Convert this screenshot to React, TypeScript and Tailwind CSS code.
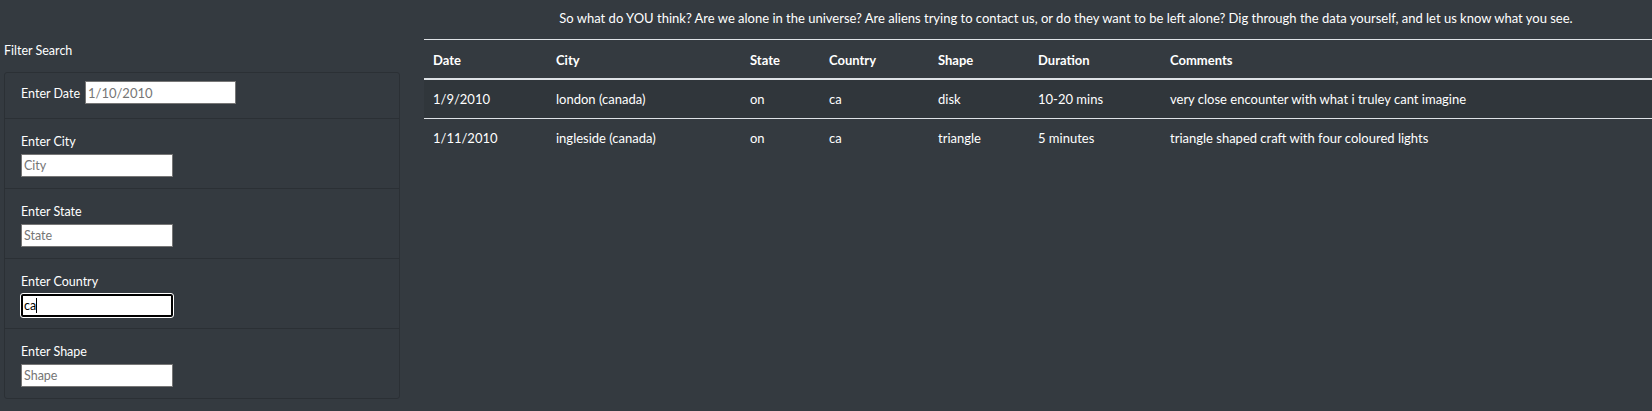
import { useState } from "react";

interface Sighting {
  date: string;
  city: string;
  state: string;
  country: string;
  shape: string;
  duration: string;
  comments: string;
}

const sightings: Sighting[] = [
  {
    date: "1/9/2010",
    city: "london (canada)",
    state: "on",
    country: "ca",
    shape: "disk",
    duration: "10-20 mins",
    comments: "very close encounter with what i truley cant imagine",
  },
  {
    date: "1/11/2010",
    city: "ingleside (canada)",
    state: "on",
    country: "ca",
    shape: "triangle",
    duration: "5 minutes",
    comments: "triangle shaped craft with four coloured lights",
  },
];

const cols =
  "grid grid-cols-[123px_194px_79px_109px_100px_132px_1fr] items-center";

function FilterItem({ label, placeholder }: { label: string; placeholder: string }) {
  return (
    <li className="border-t border-[#2b3035] pl-[16px] pt-[12px] pb-[11px]">
      <label className="block pt-[2px] leading-[18px]">{label}</label>
      <input
        type="text"
        placeholder={placeholder}
        className="mt-[3px] block h-[23px] w-[152px] border border-[#767676] bg-white px-[2px] text-[12.5px] text-black placeholder:text-[#757575] outline-none"
      />
    </li>
  );
}

export default function App() {
  const [date] = useState("");

  return (
    <div
      className="h-[411px] w-full bg-[#343a40] text-white flex"
      style={{ fontFamily: "Lato, 'Open Sans', sans-serif" }}
    >
      {/* Sidebar filters */}
      <div className="w-[404px] shrink-0 pl-[4px] text-[12.5px]">
        <p className="pt-[42px] leading-[18px]">Filter Search</p>
        <ul className="mt-[12px] w-[396px] rounded-[3px] border border-[#2b3035]">
          <li className="flex items-center pl-[16px] pt-[8px] pb-[14px]">
            <label className="mt-[3px] leading-[18px]">Enter Date</label>
            <input
              type="text"
              value={date}
              readOnly
              placeholder="1/10/2010"
              className="ml-[5px] h-[23px] w-[151px] border border-[#767676] bg-white px-[2px] text-[13px] text-black placeholder:text-[#757575] outline-none"
            />
          </li>
          <FilterItem label="Enter City" placeholder="City" />
          <FilterItem label="Enter State" placeholder="State" />
          <li className="border-t border-[#2b3035] pl-[16px] pt-[12px] pb-[11px]">
            <label className="block pt-[2px] leading-[18px]">Enter Country</label>
            <div className="relative mt-[3px] h-[23px] w-[152px] rounded-[2px] border-2 border-black bg-white px-[1px] text-[12.5px] leading-[19px] text-black outline outline-1 outline-white">
              ca
              <span className="absolute left-[13px] top-[2px] h-[15px] w-px bg-black" />
            </div>
          </li>
          <FilterItem label="Enter Shape" placeholder="Shape" />
        </ul>
      </div>

      {/* Results */}
      <div className="flex-1 pl-[20px] text-[13px]">
        <p className="pt-[9px] pl-[56px] text-center leading-[18px]">
          So what do YOU think? Are we alone in the universe? Are aliens trying to contact us, or do they want to be left alone? Dig through the data yourself, and let us know what you see.
        </p>
        <div className="mt-[12px] border-t border-[#dee2e6]">
          <div className={`${cols} h-[40px] pt-[3px] border-b-2 border-[#dee2e6] font-bold`}>
            <span className="pl-[9px]">Date</span>
            <span className="pl-[9px]">City</span>
            <span className="pl-[9px]">State</span>
            <span className="pl-[9px]">Country</span>
            <span className="pl-[9px]">Shape</span>
            <span className="pl-[9px]">Duration</span>
            <span className="pl-[9px]">Comments</span>
          </div>
          {sightings.map((s, i) => (
            <div
              key={s.date}
              className={`${cols} h-[39px] pt-[1px] ${
                i === 0 ? "border-b border-[#dee2e6] bg-[#30363b]" : ""
              }`}
            >
              <span className="pl-[9px]">{s.date}</span>
              <span className="pl-[9px]">{s.city}</span>
              <span className="pl-[9px]">{s.state}</span>
              <span className="pl-[9px]">{s.country}</span>
              <span className="pl-[9px]">{s.shape}</span>
              <span className="pl-[9px]">{s.duration}</span>
              <span className="pl-[9px]">{s.comments}</span>
            </div>
          ))}
        </div>
      </div>
    </div>
  );
}
